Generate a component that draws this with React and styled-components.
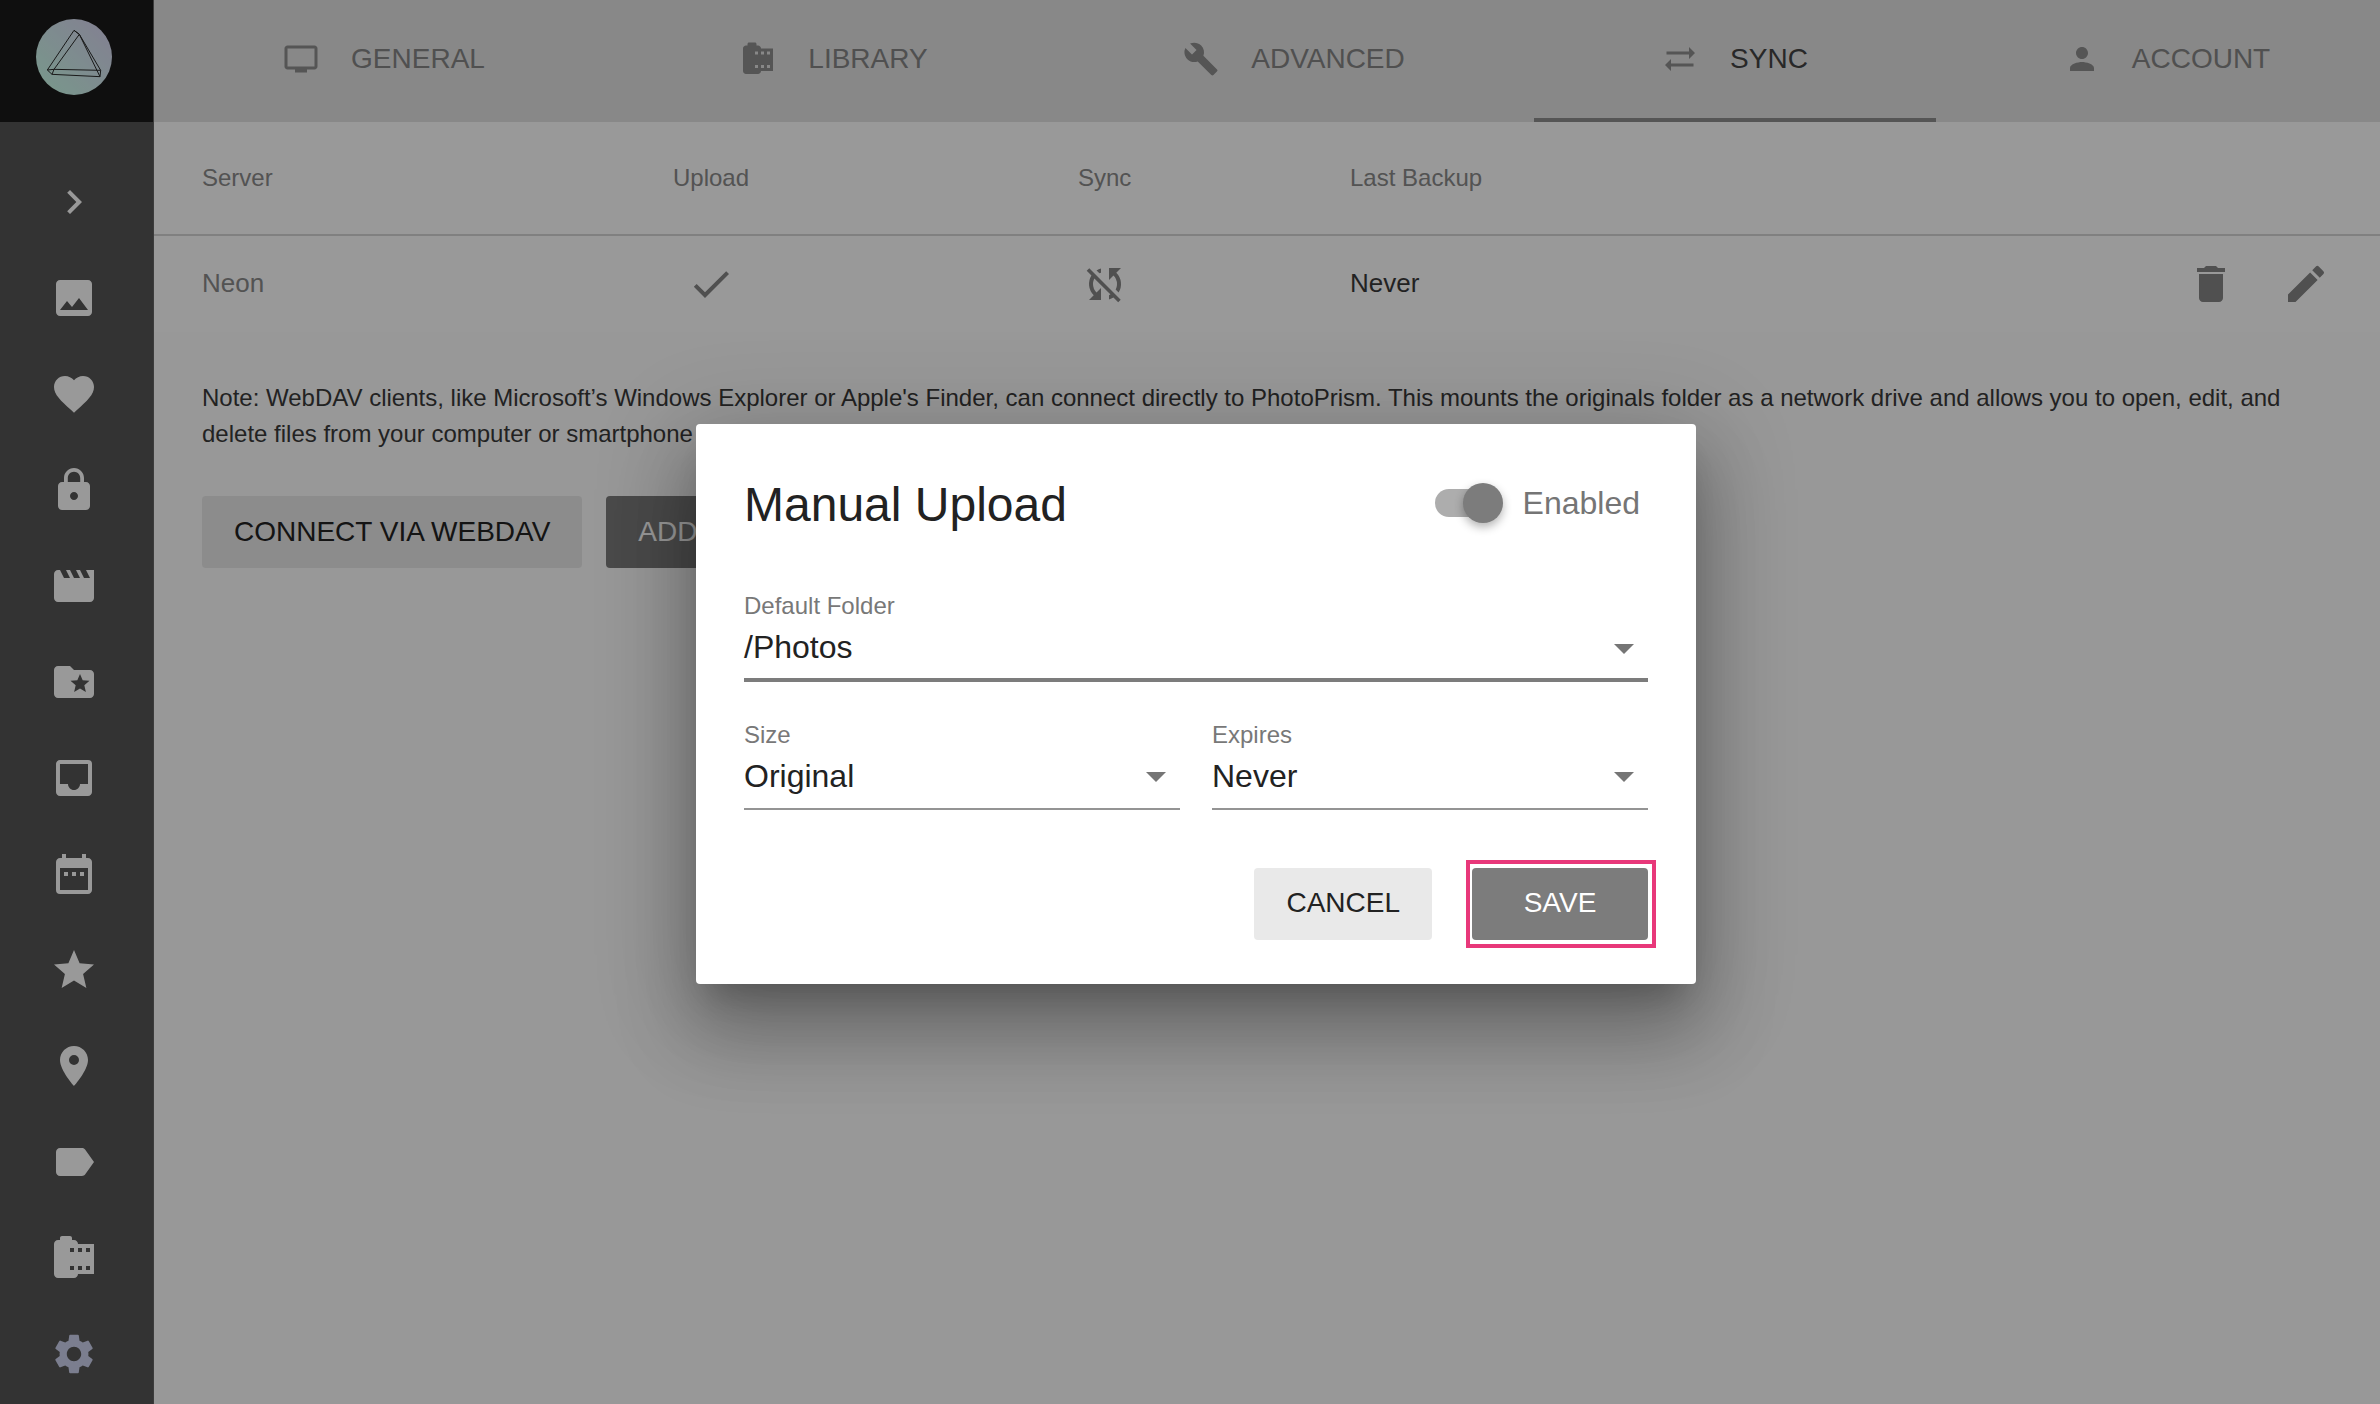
import React from "react";
import styled, { createGlobalStyle } from "styled-components";
import {
  MdArrowDropDown,
  MdBuild,
  MdCameraRoll,
  MdCheck,
  MdChevronRight,
  MdDateRange,
  MdDelete,
  MdEdit,
  MdFavorite,
  MdFolderSpecial,
  MdInbox,
  MdLabel,
  MdLock,
  MdMovie,
  MdPerson,
  MdPhoto,
  MdPlace,
  MdSettings,
  MdStar,
  MdSyncAlt,
  MdSyncDisabled,
  MdTv,
} from "react-icons/md";

const GlobalStyle = createGlobalStyle`
  html, body {
    margin: 0;
    padding: 0;
    background: #fff;
  }
  body {
    font-family: "Liberation Sans", Arial, sans-serif;
  }
`;

const Page = styled.div`
  position: relative;
  display: flex;
  width: 2380px;
  height: 1404px;
  overflow: hidden;
`;

const Sidebar = styled.nav`
  flex: 0 0 154px;
  box-sizing: border-box;
  display: flex;
  flex-direction: column;
  background: #555;
  border-right: 1px solid #646464;
`;

const LogoBox = styled.div`
  flex: 0 0 122px;
  display: flex;
  align-items: center;
  justify-content: center;
  padding-bottom: 8px;
  box-sizing: border-box;
  background: #191919;
`;

const Logo = styled.svg`
  width: 76px;
  height: 76px;
  margin-left: -5px;
`;

const NavList = styled.div`
  display: flex;
  flex-direction: column;
  padding-top: 32px;
`;

const NavItem = styled.div`
  flex: 0 0 96px;
  display: flex;
  align-items: center;
  justify-content: center;
  padding-right: 5px;
  font-size: 48px;
  color: ${(p) => (p.$active ? "#cdd2ee" : "#fff")};
`;

const Main = styled.main`
  flex: 1;
  min-width: 0;
  display: flex;
  flex-direction: column;
  background: #fdfdfd;
`;

const Tabs = styled.div`
  flex: 0 0 122px;
  display: flex;
  overflow: hidden;
  background: #e3e3e3;
`;

const Tab = styled.div`
  flex: 0 0 ${(p) => p.$width}px;
  display: flex;
  align-items: center;
  justify-content: center;
  gap: 32px;
  padding-bottom: 1px;
  box-sizing: border-box;
  height: 122px;
  font-size: 28px;
  color: ${(p) => (p.$active ? "#444" : "#858585")};
  border-bottom: 4px solid ${(p) => (p.$active ? "#8e8e8e" : "transparent")};
`;

const TabIcon = styled.span`
  display: flex;
  font-size: 36px;
  color: #8e8e8e;
`;

const TableHead = styled.div`
  display: grid;
  grid-template-columns: 471px 405px 272px 1fr;
  align-items: center;
  height: 112px;
  padding-left: 48px;
  font-size: 24px;
  color: #8a8a8a;
  background: #fff;
  border-bottom: 2px solid #d5d5d5;
`;

const TableRow = styled.div`
  display: grid;
  grid-template-columns: 471px 405px 272px 1fr;
  align-items: center;
  height: 96px;
  padding: 0 50px 0 48px;
  font-size: 26px;
  color: #8a8a8a;
  background: #fff;
`;

const RowText = styled.div`
  padding-bottom: 2px;
`;

const IconCell = styled.div`
  display: flex;
  justify-content: center;
  width: ${(p) => p.$width}px;
  font-size: 48px;
  color: #858585;
`;

const LastBackup = styled.div`
  display: flex;
  align-items: center;
  justify-content: space-between;
  color: #3a3a3a;
`;

const RowActions = styled.div`
  display: flex;
  gap: 47px;
  font-size: 48px;
  color: #858585;

  svg {
    display: block;
  }
`;

const Content = styled.div`
  padding: 48px 50px 0 48px;
`;

const Note = styled.p`
  margin: 0;
  font-size: 24px;
  line-height: 36px;
  color: #3a3a3a;
`;

const ButtonRow = styled.div`
  display: flex;
  gap: 24px;
  margin-top: 44px;
`;

const Button = styled.button`
  position: relative;
  height: 72px;
  min-width: 176px;
  padding: 0 32px;
  border: 0;
  border-radius: 4px;
  font-family: inherit;
  font-size: 28px;
  color: ${(p) => (p.$primary ? "#fff" : "#222")};
  background: ${(p) => (p.$primary ? "#7c7c7c" : "#e9e9e9")};
`;

const SaveButton = styled(Button)`
  &::after {
    content: "";
    position: absolute;
    inset: -8px -8px -8px -6px;
    border: 4px solid #e8387a;
  }
`;

const Overlay = styled.div`
  position: absolute;
  inset: 0;
  display: flex;
  align-items: center;
  justify-content: center;
  padding: 4px 0 0 12px;
  background: rgba(0, 0, 0, 0.4);
`;

const Dialog = styled.section`
  width: 1000px;
  height: 560px;
  box-sizing: border-box;
  padding: 48px 48px 0;
  border-radius: 4px;
  background: #fff;
  box-shadow: 0 22px 30px -14px rgba(0, 0, 0, 0.2),
    0 48px 76px 6px rgba(0, 0, 0, 0.22), 0 18px 92px 16px rgba(0, 0, 0, 0.16);
`;

const DialogHeader = styled.header`
  display: flex;
  align-items: center;
  justify-content: space-between;
  height: 64px;
  margin-bottom: 56px;
`;

const DialogTitle = styled.h2`
  margin: 0;
  font-size: 48px;
  font-weight: 400;
  color: #222;
`;

const SwitchWrap = styled.div`
  display: flex;
  align-items: center;
  gap: 20px;
  padding: 0 8px 2px 0;
  font-size: 32px;
  color: #757575;
`;

const SwitchTrack = styled.div`
  position: relative;
  width: 60px;
  height: 28px;
  margin-right: 8px;
  border-radius: 14px;
  background: #adadad;
`;

const SwitchThumb = styled.div`
  position: absolute;
  top: -6px;
  right: -8px;
  width: 40px;
  height: 40px;
  border-radius: 50%;
  background: #7c7c7c;
  box-shadow: 0 4px 10px rgba(0, 0, 0, 0.3);
`;

const FieldRow = styled.div`
  display: grid;
  grid-template-columns: 1fr 1fr;
  gap: 32px;
  margin-top: 39px;
`;

const Field = styled.div`
  display: flex;
  flex-direction: column;
`;

const FieldLabel = styled.label`
  height: 28px;
  font-size: 24px;
  line-height: 28px;
  color: #787878;
`;

const FieldValue = styled.div`
  display: flex;
  align-items: center;
  justify-content: space-between;
  height: ${(p) => (p.$focused ? 55 : 54)}px;
  padding-bottom: ${(p) => (p.$focused ? 3 : 5)}px;
  font-size: 32px;
  color: #222;
  border-bottom: ${(p) => (p.$focused ? "4px solid #7c7c7c" : "2px solid #949494")};
`;

const Caret = styled.span`
  display: flex;
  font-size: 48px;
  color: #757575;
`;

const DialogActions = styled.footer`
  display: flex;
  justify-content: flex-end;
  gap: 40px;
  margin-top: 58px;

  button {
    padding-bottom: 2px;
  }
`;

const navIcons = [
  MdChevronRight,
  MdPhoto,
  MdFavorite,
  MdLock,
  MdMovie,
  MdFolderSpecial,
  MdInbox,
  MdDateRange,
  MdStar,
  MdPlace,
  MdLabel,
  MdCameraRoll,
  MdSettings,
];

const tabs = [
  { label: "GENERAL", icon: MdTv, width: 460 },
  { label: "LIBRARY", icon: MdCameraRoll, width: 440 },
  { label: "ADVANCED", icon: MdBuild, width: 480 },
  { label: "SYNC", icon: MdSyncAlt, width: 402, active: true },
  { label: "ACCOUNT", icon: MdPerson, width: 462 },
];

const LogoMark = () => (
  <Logo viewBox="0 0 228 228">
    <defs>
      <linearGradient id="logoFill" x1="0" y1="1" x2="1" y2="0">
        <stop offset="0" stopColor="#c8ffe8" />
        <stop offset="1" stopColor="#dcd4f4" />
      </linearGradient>
    </defs>
    <circle cx="114" cy="114" r="114" fill="url(#logoFill)" />
    <path
      d="M114 34L34 153L48 166L192 173L194 154L130 46ZM114 34L130 46L192 173M130 46L54 151L194 154M34 153L54 151M48 166L54 151"
      fill="none"
      stroke="#2a2a2a"
      strokeWidth="3"
      strokeLinejoin="round"
    />
  </Logo>
);

const SelectField = ({ label, value, focused }) => (
  <Field>
    <FieldLabel>{label}</FieldLabel>
    <FieldValue $focused={focused}>
      {value}
      <Caret>
        <MdArrowDropDown />
      </Caret>
    </FieldValue>
  </Field>
);

const App = () => {
  return (
    <Page>
      <GlobalStyle />
      <Sidebar>
        <LogoBox>
          <LogoMark />
        </LogoBox>
        <NavList>
          {navIcons.map((Icon, i) => (
            <NavItem key={i} $active={Icon === MdSettings}>
              <Icon />
            </NavItem>
          ))}
        </NavList>
      </Sidebar>
      <Main>
        <Tabs>
          {tabs.map((t) => (
            <Tab key={t.label} $width={t.width} $active={t.active}>
              <TabIcon>
                <t.icon />
              </TabIcon>
              {t.label}
            </Tab>
          ))}
        </Tabs>
        <TableHead>
          <div>Server</div>
          <div>Upload</div>
          <div>Sync</div>
          <div>Last Backup</div>
        </TableHead>
        <TableRow>
          <RowText>Neon</RowText>
          <IconCell $width={76}>
            <MdCheck />
          </IconCell>
          <IconCell $width={54}>
            <MdSyncDisabled />
          </IconCell>
          <LastBackup>
            <RowText>Never</RowText>
            <RowActions>
              <MdDelete />
              <MdEdit />
            </RowActions>
          </LastBackup>
        </TableRow>
        <Content>
          <Note>
            Note: WebDAV clients, like Microsoft’s Windows Explorer or Apple's Finder, can connect
            directly to PhotoPrism. This mounts the originals folder as a network drive and allows
            you to open, edit, and delete files from your computer or smartphone as if they were
            local.
          </Note>
          <ButtonRow>
            <Button>CONNECT VIA WEBDAV</Button>
            <Button $primary>ADD SERVER</Button>
          </ButtonRow>
        </Content>
      </Main>
      <Overlay>
        <Dialog>
          <DialogHeader>
            <DialogTitle>Manual Upload</DialogTitle>
            <SwitchWrap>
              <SwitchTrack>
                <SwitchThumb />
              </SwitchTrack>
              Enabled
            </SwitchWrap>
          </DialogHeader>
          <SelectField label="Default Folder" value="/Photos" focused />
          <FieldRow>
            <SelectField label="Size" value="Original" />
            <SelectField label="Expires" value="Never" />
          </FieldRow>
          <DialogActions>
            <Button>CANCEL</Button>
            <SaveButton $primary>SAVE</SaveButton>
          </DialogActions>
        </Dialog>
      </Overlay>
    </Page>
  );
};

export default App;
